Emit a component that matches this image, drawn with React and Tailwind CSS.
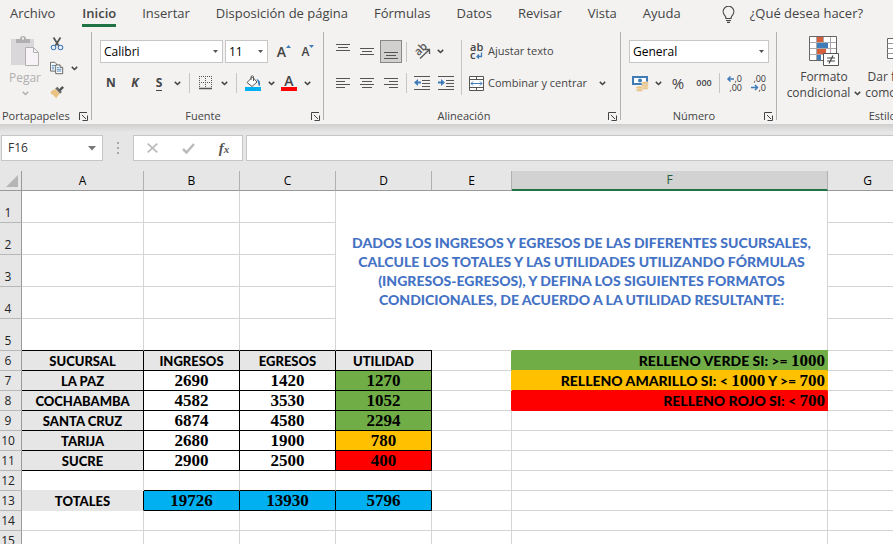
import React from "react";

const ui = "font-['Open_Sans','Noto_Sans',sans-serif]";

const Chevron = ({ className = "" }) => (
  <svg className={`h-[5px] w-[7px] ${className}`} viewBox="0 0 7 5" fill="none" stroke="currentColor" strokeWidth="1.5" aria-hidden="true">
    <path d="M.8.9 3.5 3.5 6.2.9" />
  </svg>
);

const Launcher = () => (
  <svg width="9" height="9" viewBox="0 0 9 9" fill="none" stroke="#444" aria-hidden="true">
    <path d="M.5 8V.5H8M3 3l4 4M8.5 3.5v5h-5" />
  </svg>
);

function Group({ label, className = "", children }) {
  return (
    <section aria-label={label} className={`flex h-[88px] shrink-0 flex-col justify-between border-r border-[#b3b0ad] pt-2 ${className}`}>
      <div className="flex flex-col gap-2">{children}</div>
      <div className="-mb-1 flex h-4 items-center text-[11px] leading-4">
        <span className="flex-1 text-center">{label}</span>
        <button aria-label={`Opciones de ${label}`} className="flex h-4 w-4 items-center justify-center">
          <Launcher />
        </button>
      </div>
    </section>
  );
}

const Tool = ({ label, className = "w-6", children }) => (
  <button aria-label={label} className={`flex h-6 shrink-0 items-center justify-center ${className}`}>
    {children}
  </button>
);

const More = ({ label }) => (
  <Tool label={label} className="w-3">
    <Chevron />
  </Tool>
);

const Sep = ({ className = "ml-[6px] mr-1" }) => <span className={`h-5 w-px shrink-0 bg-[#c8c6c4] ${className}`} />;

function Combo({ label, value, className }) {
  return (
    <div className={`relative flex h-[23px] shrink-0 items-center border border-[#c6c6c6] bg-white ${className}`}>
      <select aria-label={label} className="h-full w-full appearance-none bg-transparent pl-[3px] text-xs text-black outline-none">
        <option>{value}</option>
      </select>
      <svg className="pointer-events-none absolute right-1 h-[3px] w-[5px]" viewBox="0 0 5 3" fill="#555" aria-hidden="true">
        <path d="M0 0h5L2.5 3z" />
      </svg>
    </div>
  );
}

const Lines = ({ rows, top = 1 }) => (
  <svg width="14" height="18" viewBox="0 0 14 18" stroke="#555" aria-hidden="true">
    {rows.map(([a, b], i) => (
      <path key={i} d={`M${a} ${top + i * 3 + 0.5}H${b}`} />
    ))}
  </svg>
);

const Scissors = () => (
  <svg width="16" height="16" viewBox="0 0 16 16" fill="none" aria-hidden="true">
    <path d="M4 .5l6 9.5M12 .5 6 10" stroke="#555" strokeWidth="2" />
    <circle cx="4" cy="12" r="2.6" stroke="#3f7cb8" strokeWidth="1.2" />
    <circle cx="12" cy="12" r="2.6" stroke="#3f7cb8" strokeWidth="1.2" />
  </svg>
);

const Copy = () => (
  <svg width="16" height="16" viewBox="0 0 16 16" fill="#fff" aria-hidden="true">
    <path d="M.5 1.500h5l2 2v8h-7z" stroke="#555" />
    <path d="M2 5h4M2 7h3M2 9h3" stroke="#3f7cb8" />
    <path d="M6.500 4.500h5l3 3v7h-8z" stroke="#555" />
    <path d="M11.500 4.500v3h3" stroke="#555" />
    <path d="M8 7.500h2M8 9.500h5M8 11.500h5" stroke="#3f7cb8" />
  </svg>
);

const Brush = () => (
  <svg width="16" height="16" viewBox="0 0 16 16" aria-hidden="true">
    <path d="M1 7 6 4.500 11 10 7 15Q4 11 1 10z" fill="#eac282" />
    <path d="M6 4 8.500 2 13.500 8 11.500 10z" fill="#6a6a6a" />
    <path d="m10 5 4-4 2 2-4 4z" fill="#555" />
  </svg>
);

const Paste = () => (
  <svg width="30" height="31" viewBox="0 0 30 31" aria-hidden="true">
    <path d="M1 3h23v26H1z" fill="#d9d7d9" />
    <path d="M6 7V3h4a3 3 0 0 1 6 0h4v4z" fill="#b1b0b1" />
    <path d="M12 1.500h2v2h-2z" fill="#f3f2f1" />
    <path d="M15.500 11.500h8l5 5v13h-13z" fill="#f7f3f7" stroke="#b1b0b1" />
    <path d="M23.500 11.500v5h5" fill="none" stroke="#b1b0b1" />
  </svg>
);

const Borders = () => (
  <svg width="14" height="14" viewBox="0 0 14 14" stroke="#555" aria-hidden="true">
    <path d="M0 .5h13M0 6.500h13M.5 0v12M6.500 0v12M12.500 0v12" strokeDasharray="1 1" />
    <path d="M0 12.500h13" strokeWidth="1.500" />
  </svg>
);

const Bucket = () => (
  <svg width="16" height="16" viewBox="0 0 16 16" aria-hidden="true">
    <path d="M2 7.500 7.500 2 12 7l-5 4.500z" fill="#fff" stroke="#555" />
    <path d="M6 5V1.500Q7.500 0 8.500 1.500V6" fill="none" stroke="#555" />
    <path d="M11.500 4Q16 5 15 11Q13 11 13 7z" fill="#3f7cb8" />
    <path d="M0 12h16v4H0z" fill="#00b0f0" />
  </svg>
);

const Orientation = () => (
  <svg className="overflow-visible" width="17" height="17" viewBox="0 0 17 17" aria-hidden="true">
    <text x="2" y="11" transform="rotate(-45 6 9)" fontSize="11" fontWeight="600" fill="#555">ab</text>
    <path d="M6 15.500 15 7M11 6.500h4.500V11" fill="none" stroke="#555" strokeWidth="1.300" />
  </svg>
);

const Indent = ({ out }) => (
  <svg width="16" height="14" viewBox="0 0 16 14" aria-hidden="true">
    <path d="M0 .5h16M8 4.500h8M8 7.500h8M8 10.500h8M0 13.500h16" stroke="#555" />
    <path d={out ? "M0 6.500 4 3v2.500h3v2H4V10z" : "M7 6.500 3 3v2.500H0v2h3V10z"} fill="#3f7cb8" />
  </svg>
);

const Wrap = () => (
  <svg className="overflow-visible" width="15" height="18" viewBox="0 0 15 18" aria-hidden="true">
    <text x="1" y="8" fontSize="11" fontWeight="600" fill="#444">ab</text>
    <text x="1" y="16" fontSize="11" fontWeight="600" fill="#444">c</text>
    <path d="M12.500 9.500v4H8M10 11.500l-2 2 2 2" fill="none" stroke="#3f7cb8" strokeWidth="1.300" />
  </svg>
);

const Merge = () => (
  <svg width="15" height="15" viewBox="0 0 15 15" fill="none" aria-hidden="true">
    <path d="M.5.5h14v14H.5zM.5 3.500h14M.5 11.500h14M7.500.5v3M7.500 11.500v3" fill="#fff" stroke="#555" />
    <path d="M2 7.500h11M4 5.500l-2 2 2 2M11 5.500l2 2-2 2" stroke="#3f7cb8" />
  </svg>
);

const Money = () => (
  <svg width="17" height="17" viewBox="0 0 17 17" aria-hidden="true">
    <path d="M0 1h16v9H0z" fill="#3f7cb8" />
    <path d="M2 3h12v5H2z" fill="#fff" />
    <circle cx="8" cy="5.500" r="2" fill="#3f7cb8" />
    <g fill="#eac282" stroke="#f3f2f1" strokeWidth=".5">
      <ellipse cx="13" cy="13" rx="3.500" ry="1.500" />
      <ellipse cx="13" cy="10.500" rx="3.500" ry="1.500" />
      <ellipse cx="13" cy="8" rx="3.500" ry="1.500" />
      <ellipse cx="7.500" cy="15" rx="3.500" ry="1.500" />
      <ellipse cx="7.500" cy="12.500" rx="3.500" ry="1.500" />
    </g>
  </svg>
);

const Decimals = ({ less }) => (
  <svg className="overflow-visible" width="16" height="17" viewBox="0 0 16 17" aria-hidden="true">
    <text x="15" y="7" textAnchor="end" fontSize="9" fill="#333">{less ? ",00" : ",0"}</text>
    <text x="15" y="16" textAnchor="end" fontSize="9" fill="#333">{less ? ",0" : ",00"}</text>
    {less ? (
      <path d="M0 12.500h6M4 10l2.500 2.500L4 15" fill="none" stroke="#3f7cb8" strokeWidth="1.500" />
    ) : (
      <path d="M1 4h6M3.500 1.500 1 4l2.500 2.500" fill="none" stroke="#3f7cb8" strokeWidth="1.500" />
    )}
  </svg>
);

const Conditional = () => (
  <svg width="30" height="30" viewBox="0 0 30 30" aria-hidden="true">
    <path d="M.5.5h27v24H.5z" fill="#fff" />
    <path d="M7.500.5v24M14.500.5v24M21.500.5v24M.5 6.500h27M.5 12.500h27M.5 18.500h27" stroke="#a8a8a8" />
    <path d="M.5.5h27v24H.5z" fill="none" stroke="#666" />
    <path d="M8 1h6v5H8zM8 13h9v5H8z" fill="#d65f3e" />
    <path d="M8 7h11v5H8zM8 19h4v5H8z" fill="#3f7cb8" />
    <path d="M14.500 17.500h15v12h-15z" fill="#fff" stroke="#555" />
    <path d="M18 22h8M18 25h8M24 19.500l-4 8" stroke="#444" strokeWidth="1.200" />
  </svg>
);

const TableFormat = () => (
  <svg width="30" height="30" viewBox="0 0 30 30" aria-hidden="true">
    <path d="M.5 2.500h27v20H.5z" fill="#fff" stroke="#666" />
    <path d="M7 8h20v14H7z" fill="#9cc3e6" />
    <path d="M.5 7.500h27M.5 12.500h27M.5 17.500h27M7.500 2.500v20M14.500 2.500v20M21.500 2.500v20" stroke="#999" />
  </svg>
);

const Bulb = () => (
  <svg width="13" height="17" viewBox="0 0 13 17" fill="none" stroke="#444" strokeWidth="1.200" aria-hidden="true">
    <path d="M4 12.500Q4 10.500 2.300 8.800A5.300 5.300 0 1 1 10.700 8.800Q9 10.500 9 12.500zM4 14.500h5M5 16.400h3" />
  </svg>
);

const tabs = ["Archivo", "Inicio", "Insertar", "Disposición de página", "Fórmulas", "Datos", "Revisar", "Vista", "Ayuda"];

function Tabs() {
  return (
    <nav className="flex h-7 shrink-0 items-stretch whitespace-nowrap text-[13px]">
      {tabs.map((t, i) => (
        <button key={t} className={`shrink-0 ${i === 0 ? "pl-[10px] pr-[14px]" : "px-[13px]"}`}>
          <span className={`flex h-[26px] items-center border-b-[3px] pt-[3px] ${t === "Inicio" ? "border-[#217346] font-semibold" : "border-transparent"}`}>{t}</span>
        </button>
      ))}
      <button className="ml-7 flex shrink-0 items-center gap-[15px]">
        <Bulb />
        <span>¿Qué desea hacer?</span>
      </button>
    </nav>
  );
}

function Ribbon() {
  return (
    <div className="flex h-24 shrink-0 whitespace-nowrap pt-1 text-xs">
      <section aria-label="Portapapeles" className="flex h-[88px] w-[92px] shrink-0 flex-col justify-between border-r border-[#b3b0ad]">
        <div className="flex">
          <button disabled className="mt-1 flex w-[50px] flex-col items-center text-[#b1b0af]">
            <Paste />
            <span className="leading-[22px]">Pegar</span>
            <Chevron className="mt-[2px]" />
          </button>
          <div className="flex flex-col">
            <Tool label="Cortar" className="w-[14px]"><Scissors /></Tool>
            <div className="flex">
              <Tool label="Copiar" className="w-[14px]"><Copy /></Tool>
              <span className="w-1" />
              <More label="Opciones de copia" />
            </div>
            <Tool label="Copiar formato" className="w-[14px]"><Brush /></Tool>
          </div>
        </div>
        <div className="-mb-1 flex h-4 items-center justify-between pl-[2px] text-[11px]">
          <span>Portapapeles</span>
          <button aria-label="Opciones de Portapapeles" className="flex h-4 w-4 items-center justify-center"><Launcher /></button>
        </div>
      </section>

      <Group label="Fuente" className="w-[232px] pl-[7px]">
        <div className="flex h-[23px] items-center gap-[2px] pl-px">
          <Combo label="Fuente" value="Calibri" className="w-[123px]" />
          <Combo label="Tamaño de fuente" value="11" className="w-[43px]" />
          <div className="flex pl-[2px]">
            <Tool label="Aumentar tamaño">
              <span className="text-[14px] font-semibold leading-5">A</span>
              <svg width="5" height="16" viewBox="0 0 5 16" fill="#3f7cb8" aria-hidden="true"><path d="M0 4h5L2.500 1z" /></svg>
            </Tool>
            <Tool label="Disminuir tamaño">
              <span className="text-[12px] font-semibold leading-5">A</span>
              <svg width="5" height="16" viewBox="0 0 5 16" fill="#3f7cb8" aria-hidden="true"><path d="M0 1h5L2.500 4z" /></svg>
            </Tool>
          </div>
        </div>
        <div className="flex items-center">
          <Tool label="Negrita"><b>N</b></Tool>
          <Tool label="Cursiva"><b className="italic">K</b></Tool>
          <Tool label="Subrayado"><b className="border-b border-[#444] leading-[14px]">S</b></Tool>
          <More label="Más subrayado" />
          <Sep />
          <Tool label="Bordes"><Borders /></Tool>
          <More label="Más bordes" />
          <Sep />
          <Tool label="Color de relleno"><Bucket /></Tool>
          <More label="Más colores de relleno" />
          <Tool label="Color de fuente">
            <span className="w-4 border-b-4 border-[#f00] text-center text-[14px] font-semibold leading-3">A</span>
          </Tool>
          <More label="Más colores de fuente" />
        </div>
      </Group>

      <Group label="Alineación" className="w-[297px]">
        <div className="flex h-[55px] pl-[7px]">
          <div className="flex w-[130px] flex-col gap-2">
            <div className="flex h-[23px] items-center">
              <Tool label="Alinear arriba"><Lines top={1} rows={[[0, 14], [2, 12], [0, 14]]} /></Tool>
              <Tool label="Alinear en medio"><Lines top={5} rows={[[0, 14], [2, 12], [0, 14]]} /></Tool>
              <button aria-label="Alinear abajo" aria-pressed="true" className="mx-px flex h-[23px] w-[22px] items-center justify-center border border-[#8a8886] bg-[#d2d0ce]">
                <Lines top={9} rows={[[0, 14], [2, 12], [0, 14]]} />
              </button>
              <Sep className="mx-[3px]" />
              <Tool label="Orientación"><Orientation /></Tool>
              <More label="Más orientación" />
            </div>
            <div className="flex items-center">
              <Tool label="Alinear a la izquierda"><Lines top={4} rows={[[0, 14], [0, 9], [0, 14], [0, 9]]} /></Tool>
              <Tool label="Centrar"><Lines top={4} rows={[[0, 14], [2, 12], [0, 14], [2, 12]]} /></Tool>
              <Tool label="Alinear a la derecha"><Lines top={4} rows={[[0, 14], [5, 14], [0, 14], [5, 14]]} /></Tool>
              <Sep className="mx-[3px]" />
              <Tool label="Disminuir sangría"><Indent out /></Tool>
              <Tool label="Aumentar sangría"><Indent /></Tool>
            </div>
          </div>
          <div className="flex flex-col gap-2 border-l border-[#c8c6c4] pl-[7px] text-[11px]">
            <button className="flex h-[23px] items-center gap-1"><Wrap />Ajustar texto</button>
            <button className="flex h-6 items-center gap-1">
              <Merge />
              <span>Combinar y centrar</span>
              <Chevron className="ml-2" />
            </button>
          </div>
        </div>
      </Group>

      <Group label="Número" className="w-[156px] pl-[7px]">
        <div className="flex h-[23px] pl-px">
          <Combo label="Formato de número" value="General" className="w-[140px]" />
        </div>
        <div className="flex items-center">
          <Tool label="Formato de contabilidad"><Money /></Tool>
          <More label="Más monedas" />
          <Tool label="Estilo porcentual" className="w-7"><span className="text-[15px]">%</span></Tool>
          <Tool label="Estilo millares"><span className="text-[9px] font-semibold">000</span></Tool>
          <Sep className="mx-[3px]" />
          <Tool label="Aumentar decimales"><Decimals /></Tool>
          <Tool label="Disminuir decimales"><Decimals less /></Tool>
        </div>
      </Group>

      <section aria-label="Estilos" className="flex h-[88px] w-[216px] shrink-0 flex-col justify-between pt-1">
        <div className="flex gap-px pl-2">
          <button className="flex w-[78px] flex-col items-center leading-4">
            <Conditional />
            <span className="mt-[3px]">Formato</span>
            <span className="flex items-center gap-1">condicional<Chevron /></span>
          </button>
          <button className="flex w-[76px] flex-col items-center leading-4">
            <TableFormat />
            <span className="mt-[3px]">Dar formato</span>
            <span className="flex items-center gap-1">como tabla<Chevron /></span>
          </button>
        </div>
        <span className="-mb-1 text-center text-[11px] leading-4">Estilos</span>
      </section>
    </div>
  );
}

function FormulaBar() {
  return (
    <div className="flex h-[47px] shrink-0 flex-col bg-[#e6e6e6]">
      <div className="h-2 bg-linear-to-b from-[#cfcfcf] to-[#e6e6e6]" />
      <div className="flex items-center pl-px pt-[3px]">
        <div className="relative flex h-[26px] w-[102px] shrink-0 items-center border border-[#c6c6c6] bg-white">
          <input aria-label="Cuadro de nombres" defaultValue="F16" className="w-full bg-transparent pl-[6px] text-xs text-[#333] outline-none" />
          <svg className="pointer-events-none absolute right-[6px]" width="8" height="5" viewBox="0 0 8 5" fill="#777" aria-hidden="true"><path d="M0 0h8L4 4.500z" /></svg>
        </div>
        <span className="flex w-[30px] flex-col items-center gap-[3px]">
          <i className="h-[2px] w-[2px] bg-[#aaa]" />
          <i className="h-[2px] w-[2px] bg-[#aaa]" />
          <i className="h-[2px] w-[2px] bg-[#aaa]" />
        </span>
        <div className="flex h-[26px] w-[110px] shrink-0 items-center border border-[#c6c6c6] bg-white">
          <button aria-label="Cancelar" className="flex flex-1 justify-center">
            <svg width="11" height="10" viewBox="0 0 11 10" stroke="#bbb" strokeWidth="1.800" aria-hidden="true"><path d="m.7.7 9.600 8.600M10.300.7.7 9.300" /></svg>
          </button>
          <button aria-label="Introducir" className="flex flex-1 justify-center">
            <svg width="13" height="11" viewBox="0 0 13 11" fill="none" stroke="#bbb" strokeWidth="2.500" aria-hidden="true"><path d="m1 6 3.500 3.500L12 1" /></svg>
          </button>
          <button aria-label="Insertar función" className="flex-1 text-center font-['Liberation_Serif',serif] text-[15px] font-bold italic leading-4 text-[#555]">
            f<span className="text-[11px]">x</span>
          </button>
        </div>
        <input aria-label="Barra de fórmulas" className="ml-[3px] h-[26px] min-w-0 flex-1 border border-r-0 border-[#c6c6c6] bg-white px-2 text-xs outline-none" />
      </div>
    </div>
  );
}

const TEXT = "font-['Lato',sans-serif] text-[13px] font-black";
const RULE = "font-['Lato',sans-serif] text-[14px] font-black pr-[2px] text-right";
const NUM = "font-['Liberation_Serif',serif] text-[17px] font-bold";

function Cell({ children, fill = "", right = "border-r-[#d4d4d4]", bottom = "border-b-[#d4d4d4]", className = "" }) {
  return <td className={`border-b border-r p-0 leading-[18px] ${right} ${bottom} ${fill} ${className}`}>{children}</td>;
}

const RowHead = ({ n }) => (
  <th scope="row" className="border-b border-r border-b-[#b8b8b8] border-r-[#999] bg-[#e6e6e6] p-0 pr-[5px] text-center align-bottom text-xs font-normal leading-[18px] text-[#222]">
    {n}
  </th>
);

const Num = ({ children }) => <span className={`${NUM} leading-[18px]`}>{children}</span>;

const branches = [
  ["LA PAZ", 2690, 1420, 1270, "bg-[#70ad47]"],
  ["COCHABAMBA", 4582, 3530, 1052, "bg-[#70ad47]"],
  ["SANTA CRUZ", 6874, 4580, 2294, "bg-[#70ad47]"],
  ["TARIJA", 2680, 1900, 780, "bg-[#ffc000]"],
  ["SUCRE", 2900, 2500, 400, "bg-[#f00]"],
];

const rules = [
  { text: <>RELLENO AMARILLO SI: &lt; <Num>1000</Num> Y &gt;= <Num>700</Num></>, fill: "bg-[#ffc000]", side: "border-r-[#ffc000]" },
  { text: <>RELLENO ROJO SI: &lt; <Num>700</Num></>, fill: "bg-[#f00]", side: "border-r-[#f00]" },
];

const blackEdges = { right: "border-r-black", bottom: "border-b-black" };

function Sheet() {
  return (
    <div className="min-h-0 flex-1 overflow-hidden bg-white">
      <table className="w-full min-w-[908px] table-fixed border-separate border-spacing-0 text-center text-black">
        <colgroup>
          <col className="w-[22px]" />
          <col className="w-[122px]" />
          <col className="w-24" />
          <col className="w-24" />
          <col className="w-24" />
          <col className="w-20" />
          <col className="w-[316px]" />
          <col />
        </colgroup>
        <thead>
          <tr className="h-5 bg-[#e6e6e6] text-xs leading-4">
            <th aria-label="Seleccionar todo" className="border-b border-r border-[#999] p-0">
              <svg className="ml-[6px]" width="12" height="12" viewBox="0 0 12 12" fill="#b5b5b5" aria-hidden="true"><path d="M12 0v12H0z" /></svg>
            </th>
            {["A", "B", "C", "D", "E", "F", "G"].map((c) => (
              <th key={c} scope="col" className={`border-r border-r-[#b0b0b0] p-0 font-normal ${c === "F" ? "border-b-2 border-b-[#217346] bg-[#d2d2d2] text-[#215c3c]" : "border-b border-b-[#999]"}`}>
                {c}
              </th>
            ))}
          </tr>
        </thead>
        <tbody>
          {[1, 2, 3, 4, 5].map((n) => {
            const bottom = n === 5 ? "border-b-black" : "border-b-[#d4d4d4]";
            return (
              <tr key={n} className="h-8">
                <RowHead n={n} />
                <Cell bottom={bottom} />
                <Cell bottom={bottom} />
                <Cell bottom={bottom} />
                {n === 1 && (
                  <td rowSpan={5} colSpan={3} className="border-r border-[#d4d4d4] p-0 font-['Lato',sans-serif] text-[14px] font-black leading-[19px] text-[#4472c4]">
                    DADOS LOS INGRESOS Y EGRESOS DE LAS DIFERENTES SUCURSALES,
                    <br />
                    CALCULE LOS TOTALES Y LAS UTILIDADES UTILIZANDO FÓRMULAS
                    <br />
                    (INGRESOS-EGRESOS), Y DEFINA LOS SIGUIENTES FORMATOS
                    <br />
                    CONDICIONALES, DE ACUERDO A LA UTILIDAD RESULTANTE:
                  </td>
                )}
                <Cell />
              </tr>
            );
          })}
          <tr className="h-5">
            <RowHead n={6} />
            <Cell {...blackEdges} fill="bg-[#e6e6e6]" className={TEXT}>SUCURSAL</Cell>
            <Cell {...blackEdges} fill="bg-[#e6e6e6]" className={TEXT}>INGRESOS</Cell>
            <Cell {...blackEdges} fill="bg-[#e6e6e6]" className={TEXT}>EGRESOS</Cell>
            <Cell {...blackEdges} fill="bg-[#e6e6e6]" className={`${TEXT} shadow-[0_-1px_0_#000]`}>UTILIDAD</Cell>
            <Cell right="border-r-[#70ad47]" className="shadow-[0_-1px_0_#d4d4d4]" />
            <Cell right="border-r-[#70ad47]" bottom="border-b-[#ffc000]" fill="bg-[#70ad47]" className={`${RULE} shadow-[0_-1px_0_#70ad47]`}>
              RELLENO VERDE SI: &gt;= <Num>1000</Num>
            </Cell>
            <Cell />
          </tr>
          {branches.map(([name, inc, exp, profit, fill], i) => {
            const rule = rules[i];
            return (
              <tr key={name} className="h-5">
                <RowHead n={7 + i} />
                <Cell {...blackEdges} fill="bg-[#e6e6e6]" className={TEXT}>{name}</Cell>
                <Cell {...blackEdges} className={NUM}>{inc}</Cell>
                <Cell {...blackEdges} className={NUM}>{exp}</Cell>
                <Cell {...blackEdges} fill={fill} className={NUM}>{profit}</Cell>
                <Cell right={rule ? rule.side : undefined} />
                {rule ? (
                  <Cell right={rule.side} bottom="border-b-[#f00]" fill={rule.fill} className={RULE}>{rule.text}</Cell>
                ) : (
                  <Cell />
                )}
                <Cell />
              </tr>
            );
          })}
          <tr className="h-5">
            <RowHead n={12} />
            <Cell bottom="border-b-[#e6e6e6]" />
            <Cell bottom="border-b-black" />
            <Cell bottom="border-b-black" />
            <Cell bottom="border-b-black" />
            <Cell />
            <Cell />
            <Cell />
          </tr>
          <tr className="h-5">
            <RowHead n={13} />
            <Cell right="border-r-black" bottom="border-b-[#e6e6e6]" fill="bg-[#e6e6e6]" className={TEXT}>TOTALES</Cell>
            {[19726, 13930, 5796].map((v) => (
              <Cell key={v} {...blackEdges} fill="bg-[#00b0f0]" className={NUM}>{v}</Cell>
            ))}
            <Cell />
            <Cell />
            <Cell />
          </tr>
          {[14, 15].map((n) => (
            <tr key={n} className="h-5">
              <RowHead n={n} />
              {[0, 1, 2, 3, 4, 5, 6].map((c) => (
                <Cell key={c} />
              ))}
            </tr>
          ))}
        </tbody>
      </table>
    </div>
  );
}

export default function App() {
  return (
    <main className={`flex h-screen flex-col overflow-hidden bg-[#f3f2f1] text-[#444] ${ui}`}>
      <Tabs />
      <Ribbon />
      <FormulaBar />
      <Sheet />
    </main>
  );
}
